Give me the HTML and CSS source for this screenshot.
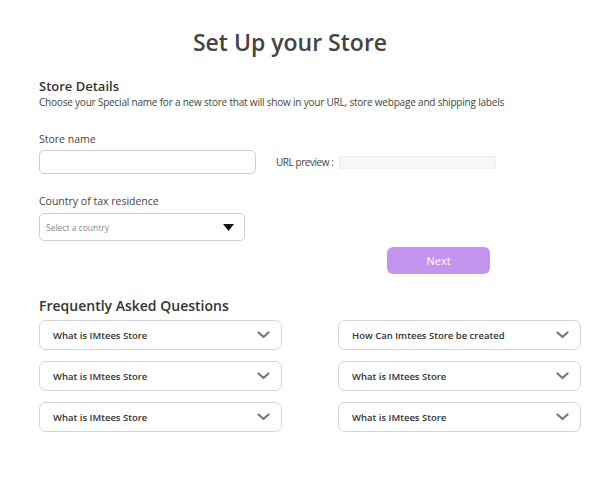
FILE: index.html
```html
<!DOCTYPE html>
<html>
<head>
<meta charset="utf-8">
<link rel="stylesheet" href="styles.css">
</head>
<body>
<div class="page">
  <h1 class="title">Set Up your Store</h1>

  <section class="details">
    <h2 class="section-title">Store Details</h2>
    <p class="desc">Choose your Special name for a new store that will show in your URL, store webpage and shipping labels</p>

    <label class="label label-name">Store name</label>
    <div class="name-row">
      <div class="input"></div>
      <span class="url-label">URL preview :</span>
      <div class="url-box"></div>
    </div>

    <label class="label label-country">Country of tax residence</label>
    <div class="select">
      <span class="placeholder">Select a country</span>
      <svg class="caret" width="11" height="7" viewBox="0 0 11 7"><path d="M0 0H11L5.5 7Z" fill="#111"/></svg>
    </div>

    <div class="actions">
      <button class="next">Next</button>
    </div>
  </section>

  <section class="faq">
    <h2 class="faq-title">Frequently Asked Questions</h2>
    <div class="faq-grid">
      <div class="faq-item"><span>What is IMtees Store</span><svg class="chev" width="13" height="8" viewBox="0 0 13 8"><path d="M1.5 1.5L6.5 6L11.5 1.5" fill="none" stroke="#777" stroke-width="2.2" stroke-linecap="round" stroke-linejoin="round"/></svg></div>
      <div class="faq-item"><span>How Can Imtees Store be created</span><svg class="chev" width="13" height="8" viewBox="0 0 13 8"><path d="M1.5 1.5L6.5 6L11.5 1.5" fill="none" stroke="#777" stroke-width="2.2" stroke-linecap="round" stroke-linejoin="round"/></svg></div>
      <div class="faq-item"><span>What is IMtees Store</span><svg class="chev" width="13" height="8" viewBox="0 0 13 8"><path d="M1.5 1.5L6.5 6L11.5 1.5" fill="none" stroke="#777" stroke-width="2.2" stroke-linecap="round" stroke-linejoin="round"/></svg></div>
      <div class="faq-item"><span>What is IMtees Store</span><svg class="chev" width="13" height="8" viewBox="0 0 13 8"><path d="M1.5 1.5L6.5 6L11.5 1.5" fill="none" stroke="#777" stroke-width="2.2" stroke-linecap="round" stroke-linejoin="round"/></svg></div>
      <div class="faq-item"><span>What is IMtees Store</span><svg class="chev" width="13" height="8" viewBox="0 0 13 8"><path d="M1.5 1.5L6.5 6L11.5 1.5" fill="none" stroke="#777" stroke-width="2.2" stroke-linecap="round" stroke-linejoin="round"/></svg></div>
      <div class="faq-item"><span>What is IMtees Store</span><svg class="chev" width="13" height="8" viewBox="0 0 13 8"><path d="M1.5 1.5L6.5 6L11.5 1.5" fill="none" stroke="#777" stroke-width="2.2" stroke-linecap="round" stroke-linejoin="round"/></svg></div>
    </div>
  </section>
</div>
</body>
</html>
```

FILE: styles.css
```css
* { box-sizing: border-box; }
html, body { margin: 0; padding: 0; background: #fff; }
body {
  width: 615px;
  height: 484px;
  font-family: "Open Sans", "Liberation Sans", sans-serif;
  color: #333;
}
.page { padding: 26px 34px 0 39px; }
.title {
  margin: 0 40px 0 0;
  text-align: center;
  font-size: 23px;
  font-weight: 600;
  line-height: 32px;
  color: #444;
}
.details { margin-top: 20px; }
.section-title {
  margin: 0;
  font-size: 13px;
  font-weight: 600;
  line-height: 16px;
  color: #333;
}
.desc {
  margin: 1px 0 0;
  font-size: 10px;
  line-height: 14px;
  color: #444;
  letter-spacing: -0.2px;
}
.label {
  display: block;
  font-size: 10.5px;
  line-height: 14px;
  color: #444;
}
.label-name { margin-top: 23px; }
.name-row {
  display: flex;
  align-items: center;
  margin-top: 4px;
}
.input {
  width: 217px;
  height: 24px;
  border: 1px solid #cfcfcf;
  border-radius: 5px;
}
.url-label {
  margin-left: 20px;
  font-size: 10px;
  color: #444;
  letter-spacing: -0.45px;
}
.url-box {
  margin-left: 6px;
  width: 157px;
  height: 13px;
  background: #f7f7f7;
  border: 1px solid #eeeeee;
}
.label-country { margin-top: 20px; }
.select {
  display: flex;
  align-items: center;
  justify-content: space-between;
  margin-top: 5px;
  width: 206px;
  height: 28px;
  padding: 0 10px 0 6px;
  border: 1px solid #cfcfcf;
  border-radius: 5px;
}
.placeholder {
  font-size: 8.5px;
  color: #888;
}
.caret { display: block; }
.actions {
  display: flex;
  margin-top: 6px;
  padding-left: 348px;
}
.next {
  width: 103px;
  height: 27px;
  border: none;
  border-radius: 6px;
  background: #c395ee;
  color: #fff;
  font-family: inherit;
  font-size: 11px;
  font-weight: 500;
}
.faq { margin-top: 22px; }
.faq-title {
  margin: 0;
  font-size: 14px;
  font-weight: 600;
  line-height: 20px;
  color: #333;
}
.faq-grid {
  display: grid;
  grid-template-columns: 243px 243px;
  grid-auto-rows: 30px;
  column-gap: 56px;
  row-gap: 11px;
  margin-top: 4px;
}
.faq-item {
  display: flex;
  align-items: center;
  justify-content: space-between;
  height: 30px;
  padding: 0 11px 0 13px;
  border: 1px solid #d6d6d6;
  border-radius: 7px;
  font-size: 9.5px;
  font-weight: 600;
  color: #333;
}
.chev { display: block; }
```
